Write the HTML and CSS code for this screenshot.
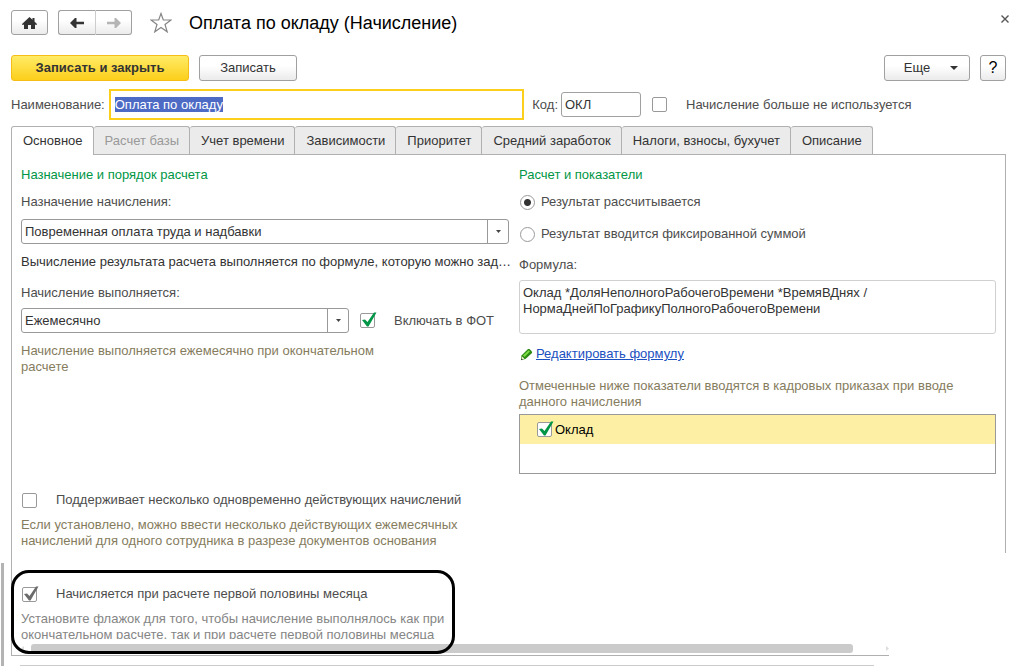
FILE: index.html
```html
<!DOCTYPE html>
<html lang="ru">
<head>
    <meta charset="UTF-8">
    <meta name="viewport" content="width=device-width, initial-scale=1.0">
    <title>Оплата по окладу (Начисление)</title>
    <link rel="stylesheet" href="styles.css">
</head>
<body>
    <div class="form">
        <header class="titlebar">
            <button type="button" class="btn home" aria-label="Домой">
                <svg width="15" height="12" viewBox="0 0 15 12"><path fill="#333" d="M7.500 0 0 7v.8h2V12h4V8h3v4h4V7.800h2V7L12.500 4.600V1h-2v1.800z"/></svg>
            </button>
            <div class="nav">
                <button type="button" class="btn" aria-label="Назад">
                    <svg width="14" height="10" viewBox="0 0 14 10"><path fill="#333" d="M0 5 5 0H6.500V3.700H14V6.300H6.500V10H5z"/></svg>
                </button>
                <button type="button" class="btn" aria-label="Вперед">
                    <svg width="14" height="10" viewBox="0 0 14 10"><path fill="#b5b5b5" d="M14 5 9 0H7.500V3.700H0V6.300H7.500V10H9z"/></svg>
                </button>
            </div>
            <svg class="star" width="22" height="21" viewBox="0 0 22 21"><path fill="#fff" stroke="#858585" stroke-width="1.200" d="M11 1.500 13.300 8H21L15 12.500 17.200 19.800 11 15.400 4.800 19.800 7 12.500 1 8H8.700z"/></svg>
            <h1>Оплата по окладу (Начисление)</h1>
            <button type="button" class="close" aria-label="Закрыть">
                <svg width="8" height="8" viewBox="0 0 8 8"><path fill="none" stroke="#555" stroke-width="1.400" d="M.5.5l7 7M7.500.5l-7 7"/></svg>
            </button>
        </header>

        <div class="commands">
            <button type="button" class="btn primary">Записать и закрыть</button>
            <button type="button" class="btn save">Записать</button>
            <button type="button" class="btn more">Еще
                <svg width="8" height="4" viewBox="0 0 8 4"><path fill="#333" d="M0 0h8L4 4z"/></svg>
            </button>
            <button type="button" class="btn help">?</button>
        </div>

        <div class="fields">
            <label for="name">Наименование:</label>
            <input type="text" id="name" class="name" value="Оплата по окладу">
            <label for="code">Код:</label>
            <input type="text" id="code" class="code" value="ОКЛ">
            <label class="check">
                <span class="box"><input type="checkbox"></span>
                Начисление больше не используется
            </label>
        </div>

        <div class="tabs" role="tablist">
            <button type="button" role="tab" class="tab active">Основное</button>
            <button type="button" role="tab" class="tab" disabled>Расчет базы</button>
            <button type="button" role="tab" class="tab">Учет времени</button>
            <button type="button" role="tab" class="tab">Зависимости</button>
            <button type="button" role="tab" class="tab">Приоритет</button>
            <button type="button" role="tab" class="tab">Средний заработок</button>
            <button type="button" role="tab" class="tab">Налоги, взносы, бухучет</button>
            <button type="button" role="tab" class="tab">Описание</button>
        </div>

        <main class="panel">
            <div class="columns">
                <section class="left">
                    <h2>Назначение и порядок расчета</h2>
                    <label class="caption" for="purpose">Назначение начисления:</label>
                    <div class="combo">
                        <select id="purpose"><option>Повременная оплата труда и надбавки</option></select>
                        <svg width="5" height="3" viewBox="0 0 5 3"><path fill="#444" d="M0 0h5L2.500 3z"/></svg>
                    </div>
                    <p class="note">Вычисление результата расчета выполняется по формуле, которую можно зад…</p>
                    <label class="caption" for="period">Начисление выполняется:</label>
                    <div class="period">
                        <div class="combo">
                            <select id="period"><option>Ежемесячно</option></select>
                            <svg width="5" height="3" viewBox="0 0 5 3"><path fill="#444" d="M0 0h5L2.500 3z"/></svg>
                        </div>
                        <label class="check">
                            <span class="box">
                                <input type="checkbox" checked>
                                <svg class="tick" width="17" height="17" viewBox="0 0 17 17"><path d="M2 8 5 7.500 7.500 10 14 .5H16.500L8.500 14.500H7z"/></svg>
                            </span>
                            Включать в ФОТ
                        </label>
                    </div>
                    <p class="hint">Начисление выполняется ежемесячно при окончательном расчете</p>
                </section>

                <section class="right">
                    <h2>Расчет и показатели</h2>
                    <label class="radio"><input type="radio" name="result" checked>Результат рассчитывается</label>
                    <label class="radio"><input type="radio" name="result">Результат вводится фиксированной суммой</label>
                    <label class="caption" for="formula">Формула:</label>
                    <textarea id="formula" class="formula" readonly>Оклад *ДоляНеполногоРабочегоВремени *ВремяВДнях /
НормаДнейПоГрафикуПолногоРабочегоВремени</textarea>
                    <div class="edit">
                        <svg width="13" height="13" viewBox="0 0 13 13">
                            <path fill="#2c8a12" d="M1 12 1.500 7.500 8 1H9.500L12 3.500V5L5.500 11z"/>
                            <path fill="#7ddc45" d="M3 7.500 8.600 2.300 10 3.500 4.500 9z"/>
                            <path fill="#f5ecd0" d="M1.500 11.500 2 8.500 4.500 10.800z"/>
                            <path fill="#333" d="M1 12.300 1.400 10.500 2.800 11.600z"/>
                        </svg>
                        <a href="#">Редактировать формулу</a>
                    </div>
                    <p class="hint">Отмеченные ниже показатели вводятся в кадровых приказах при вводе данного начисления</p>
                    <div class="list">
                        <label class="item">
                            <span class="box">
                                <input type="checkbox" checked>
                                <svg class="tick" width="17" height="17" viewBox="0 0 17 17"><path d="M2 8 5 7.500 7.500 10 14 .5H16.500L8.500 14.500H7z"/></svg>
                            </span>
                            Оклад
                        </label>
                    </div>
                </section>
            </div>

            <label class="check">
                <span class="box"><input type="checkbox"></span>
                Поддерживает несколько одновременно действующих начислений
            </label>
            <p class="hint narrow">Если установлено, можно ввести несколько действующих ежемесячных начислений для одного сотрудника в разрезе документов основания</p>
        </main>

        <div class="bottom">
            <div class="rail"></div>
            <section class="first-half">
                <div class="content">
                    <label class="check">
                        <span class="box">
                            <input type="checkbox" checked>
                            <svg class="tick gray" width="17" height="17" viewBox="0 0 17 17"><path d="M2 8 5 7.500 7.500 10 14 .5H16.500L8.500 14.500H7z"/></svg>
                        </span>
                        Начисляется при расчете первой половины месяца
                    </label>
                    <p class="hint narrow">Установите флажок для того, чтобы начисление выполнялось как при окончательном расчете, так и при расчете первой половины месяца</p>
                </div>
                <div class="scrollbar">
                    <svg width="3" height="5" viewBox="0 0 3 5"><path fill="#ddd" d="M3 0v5L0 2.500z"/></svg>
                    <div class="thumb"></div>
                    <svg width="3" height="5" viewBox="0 0 3 5"><path fill="#ddd" d="M0 0v5L3 2.500z"/></svg>
                </div>
                <div class="marker"></div>
                <div class="footline"></div>
            </section>
        </div>
    </div>

    <script>
        // Name field is ready for editing as soon as the form opens
        const nameField = document.getElementById('name');
        nameField.focus();
        nameField.select();
    </script>
</body>
</html>
```
FILE: styles.css
```css
* {
    margin: 0;
    padding: 0;
    box-sizing: border-box;
}

body {
    font-family: "Liberation Sans", Arial, sans-serif;
    font-size: 13px;
    line-height: 16px;
    color: #4d4d4d;
    background: #fff;
}

button, input, select, textarea {
    font: inherit;
    color: #333;
}

svg {
    display: block;
    flex: none;
}

.form {
    height: 100vh;
    overflow: hidden;
}

.btn {
    display: flex;
    align-items: center;
    justify-content: center;
    height: 26px;
    border: 1px solid #a0a0a0;
    border-radius: 3px;
    background: linear-gradient(#fff 40%, #ebebeb);
}

/* title */
.titlebar {
    display: flex;
    align-items: center;
    height: 45px;
    padding: 0 11px;
}

.titlebar .btn {
    width: 37px;
    height: 25px;
}

.nav {
    display: flex;
    margin: 0 18px 0 10px;
}

.nav .btn:first-child {
    width: 38px;
    border-right-color: #ccc;
    border-radius: 3px 0 0 3px;
}

.nav .btn:last-child {
    width: 36px;
    border-left: none;
    border-radius: 0 3px 3px 0;
}

h1 {
    margin-left: 17px;
    font-size: 18px;
    line-height: 24px;
    font-weight: normal;
    color: #000;
}

.close {
    align-self: flex-start;
    margin: 15px 0 0 auto;
    border: none;
    background: none;
}

/* commands */
.commands {
    display: flex;
    gap: 10px;
    padding: 10px 14px 8px 11px;
}

.primary {
    width: 178px;
    border-color: #f5bd18;
    background: linear-gradient(#ffeb66, #fccf1b);
    font-weight: bold;
}

.save {
    width: 98px;
}

.more {
    width: 86px;
    margin-left: auto;
    gap: 20px;
    padding-left: 8px;
}

.help {
    width: 26px;
    font-size: 16px;
    color: #000;
}

/* name and code */
.fields {
    display: flex;
    align-items: center;
    padding: 0 14px 0 11px;
}

.name {
    flex: 1;
    height: 31px;
    margin: 0 8px 0 4px;
    padding: 0 4px;
    border: 2px solid #fccf1b;
    outline: none;
}

.name::selection {
    color: #fff;
    background: #4d6bc4;
}

.code {
    width: 80px;
    height: 25px;
    margin: 0 11px 0 3px;
    padding: 0 3px;
    border: 1px solid #a0a0a0;
    border-radius: 3px;
}

.fields .check {
    width: 354px;
}

.check {
    display: flex;
    align-items: center;
    gap: 19px;
}

.box {
    position: relative;
    display: block;
    flex: none;
    width: 15px;
    height: 15px;
}

.box input {
    display: block;
    appearance: none;
    width: 15px;
    height: 15px;
    border: 1px solid #999;
    border-radius: 2px;
    background: #fff;
}

.tick {
    position: absolute;
    top: -1px;
    left: 0;
    fill: #009646;
}

.tick.gray {
    fill: #6b6b6b;
}

/* tabs */
.tabs {
    display: flex;
    padding: 6px 11px 0;
}

.tab {
    height: 28px;
    padding: 0 10px 0 11px;
    border: 1px solid #b0b0b0;
    border-bottom: none;
    border-left: none;
    border-radius: 3px 3px 0 0;
    background: #ebebeb;
    white-space: nowrap;
}

.tab:disabled {
    color: #999;
}

.tab.active {
    height: 29px;
    margin-bottom: -1px;
    border-left: 1px solid #b0b0b0;
    background: #fff;
    z-index: 1;
}

/* panel */
.panel {
    margin: 0 14px 0 11px;
    padding: 12px 9px 4px;
    border: 1px solid #b0b0b0;
    border-bottom: none;
}

.columns {
    display: grid;
    grid-template-columns: 488fr 477fr;
    gap: 10px;
    margin-bottom: 18px;
}

.left, .right {
    min-width: 0;
}

h2 {
    margin-bottom: 11px;
    font-size: 13px;
    font-weight: normal;
    color: #009646;
}

.caption {
    display: block;
}

.combo {
    display: grid;
    align-items: center;
    margin: 9px 0 10px;
}

.combo select, .combo svg {
    grid-area: 1 / 1;
}

.combo select {
    appearance: none;
    width: 100%;
    height: 25px;
    padding: 0 24px 0 3px;
    border: 1px solid #999;
    border-radius: 3px;
    background: linear-gradient(#999, #999) right 20px top 0 / 1px 100% no-repeat #fff;
}

.combo svg {
    justify-self: end;
    margin-right: 8px;
    pointer-events: none;
}

.note {
    margin-bottom: 15px;
    white-space: nowrap;
    color: #333;
}

.period {
    display: flex;
    align-items: center;
    gap: 11px;
    margin: 7px 0 10px;
}

.period .combo {
    flex: 1;
    margin: 0;
}

.period .check {
    width: 149px;
}

.hint {
    max-width: 450px;
    color: #857c5d;
}

.left .hint {
    max-width: 380px;
}

.panel > .check, .content .check {
    padding-left: 1px;
}

.narrow {
    margin-top: 9px;
}

.radio {
    display: flex;
    align-items: center;
    gap: 6px;
    margin-bottom: 16px;
}

.radio input {
    appearance: none;
    width: 15px;
    height: 15px;
    margin-left: 1px;
    border: 1px solid #999;
    border-radius: 50%;
}

.radio input:checked {
    background: radial-gradient(circle, #333 3px, #fff 4px);
}

.right .caption {
    margin-top: -1px;
}

.formula {
    display: block;
    width: 100%;
    height: 54px;
    margin: 7px 0 12px;
    padding: 4px 3px;
    border: 1px solid #d0d0d0;
    border-radius: 3px;
    outline: none;
    resize: none;
}

.edit {
    display: flex;
    align-items: center;
    gap: 3px;
    margin: 0 0 16px 1px;
}

.edit a {
    color: #1a50c0;
}

.list {
    height: 60px;
    margin-top: 4px;
    border: 1px solid #999;
}

.item {
    display: flex;
    align-items: center;
    gap: 3px;
    height: 29px;
    padding-left: 17px;
    background: #fdf0a5;
    color: #000;
}

/* bottom block */
.bottom {
    display: flex;
}

.rail {
    width: 3px;
    margin: 10px 7px 0 1px;
    background: #b3b3b3;
}

.first-half {
    position: relative;
    flex: 1;
    margin-right: 131px;
}

.content {
    height: 86px;
    padding: 33px 9px 0;
    overflow: hidden;
    border-left: 1px solid #b0b0b0;
}

.content .hint {
    color: #858585;
}

.scrollbar {
    display: flex;
    align-items: center;
    height: 17px;
    padding: 2px 0 0 9px;
    border: 1px solid #b0b0b0;
    border-width: 0 0 1px 1px;
}

.thumb {
    flex: 1;
    height: 9px;
    margin: 0 33px 0 7px;
    border-radius: 3px;
    background: #cbcbcb;
}

.footline {
    height: 10px;
    margin: 0 15px 0 9px;
    border-bottom: 1px solid #ccc;
}

/* frame over the block */
.marker {
    position: absolute;
    top: 17px;
    left: 0;
    width: 444px;
    height: 84px;
    border: 3px solid #000;
    border-radius: 18px;
}
```
